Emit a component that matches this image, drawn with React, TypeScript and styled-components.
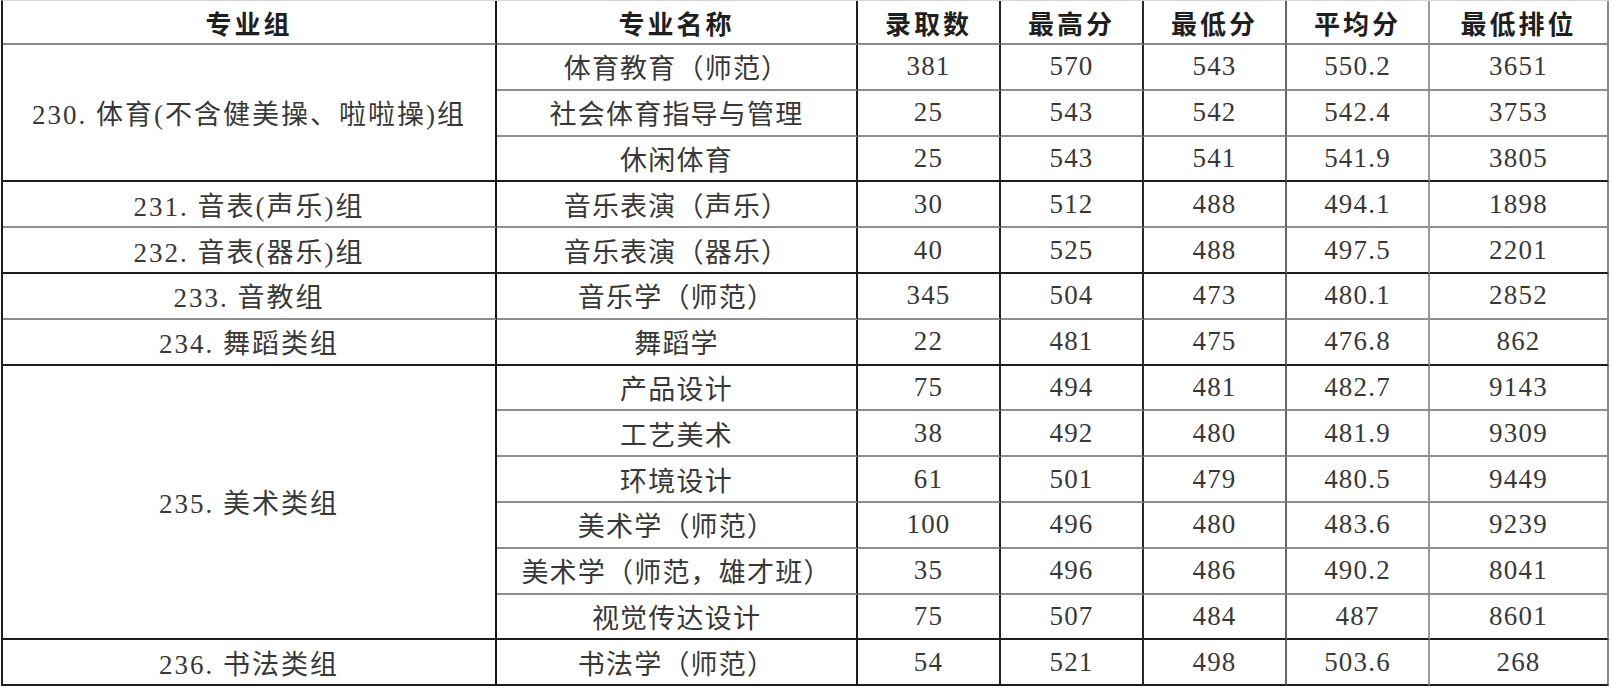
import React from "react";
import styled, { createGlobalStyle } from "styled-components";

const GlobalStyle = createGlobalStyle`
  html, body {
    margin: 0;
    padding: 0;
    background: #fff;
  }
  body {
    font-family: "Liberation Serif", "Noto Sans CJK SC", serif;
    color: #333;
  }
`;

// right-hand line colour for each column, and the outer left line
const LEFT_LINE = "#1e1e1e";
const COL_LINE = ["#151515", "#1e1e1e", "#222", "#2a2a2a", "#666", "#9a9a9a", "#8c8c8c"];
const COL_WIDTH = [494, 361, 143, 143, 143, 143, 179];

const Page = styled.div`
  padding: 0 0 0 1px;
`;

const Table = styled.table`
  border-collapse: separate;
  border-spacing: 0;
  table-layout: fixed;
  width: 1608px;
  border-left: 2px solid ${LEFT_LINE};
  border-top: 1px solid #d6d6d6;
`;

const HeadCell = styled.th<{ $col: number }>`
  height: 42px;
  padding: 0;
  font-weight: 700;
  font-size: 26px;
  letter-spacing: 3px;
  color: #1f1f1f;
  text-align: center;
  vertical-align: middle;
  border-right: 2px solid ${(p) => COL_LINE[p.$col]};
  border-bottom: 2px solid #8a8a8a;
`;

const Cell = styled.td<{ $col: number; $end: boolean }>`
  height: 43.8px;
  padding: 0;
  font-size: 27px;
  letter-spacing: 1.2px;
  color: #383838;
  text-align: center;
  vertical-align: middle;
  white-space: nowrap;
  border-right: 2px solid ${(p) => COL_LINE[p.$col]};
  border-bottom: 2px solid ${(p) => (p.$end ? "#1c1c1c" : "#8e8e8e")};
`;

const GroupCell = styled(Cell)`
  letter-spacing: 2px;
`;

type Row = [string, string, string, string, string, string];
type Group = { name: string; rows: Row[]; dark: boolean };

const groups: Group[] = [
  {
    name: "230. 体育(不含健美操、啦啦操)组",
    dark: true,
    rows: [
      ["体育教育（师范）", "381", "570", "543", "550.2", "3651"],
      ["社会体育指导与管理", "25", "543", "542", "542.4", "3753"],
      ["休闲体育", "25", "543", "541", "541.9", "3805"],
    ],
  },
  {
    name: "231. 音表(声乐)组",
    dark: false,
    rows: [["音乐表演（声乐）", "30", "512", "488", "494.1", "1898"]],
  },
  {
    name: "232. 音表(器乐)组",
    dark: true,
    rows: [["音乐表演（器乐）", "40", "525", "488", "497.5", "2201"]],
  },
  {
    name: "233. 音教组",
    dark: false,
    rows: [["音乐学（师范）", "345", "504", "473", "480.1", "2852"]],
  },
  {
    name: "234. 舞蹈类组",
    dark: true,
    rows: [["舞蹈学", "22", "481", "475", "476.8", "862"]],
  },
  {
    name: "235. 美术类组",
    dark: true,
    rows: [
      ["产品设计", "75", "494", "481", "482.7", "9143"],
      ["工艺美术", "38", "492", "480", "481.9", "9309"],
      ["环境设计", "61", "501", "479", "480.5", "9449"],
      ["美术学（师范）", "100", "496", "480", "483.6", "9239"],
      ["美术学（师范，雄才班）", "35", "496", "486", "490.2", "8041"],
      ["视觉传达设计", "75", "507", "484", "487", "8601"],
    ],
  },
  {
    name: "236. 书法类组",
    dark: true,
    rows: [["书法学（师范）", "54", "521", "498", "503.6", "268"]],
  },
];

const headers = ["专业组", "专业名称", "录取数", "最高分", "最低分", "平均分", "最低排位"];

export default function App() {
  return (
    <Page>
      <GlobalStyle />
      <Table>
        <colgroup>
          {COL_WIDTH.map((w, i) => (
            <col key={i} style={{ width: w }} />
          ))}
        </colgroup>
        <thead>
          <tr>
            {headers.map((h, i) => (
              <HeadCell key={h} $col={i}>
                {h}
              </HeadCell>
            ))}
          </tr>
        </thead>
        <tbody>
          {groups.map((g) =>
            g.rows.map((r, ri) => {
              const end = ri === g.rows.length - 1 && g.dark;
              return (
                <tr key={g.name + ri}>
                  {ri === 0 && (
                    <GroupCell rowSpan={g.rows.length} $col={0} $end={g.dark}>
                      {g.name}
                    </GroupCell>
                  )}
                  {r.map((v, ci) => (
                    <Cell key={ci} $col={ci + 1} $end={end}>
                      {v}
                    </Cell>
                  ))}
                </tr>
              );
            })
          )}
        </tbody>
      </Table>
    </Page>
  );
}
